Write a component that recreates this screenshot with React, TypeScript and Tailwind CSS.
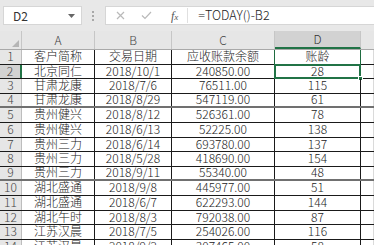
import React from 'react';

const rows: [string, string, string, string][] = [
  ['客户简称', '交易日期', '应收账款余额', '账龄'],
  ['北京同仁', '2018/10/1', '240850.00', '28'],
  ['甘肃龙康', '2018/7/6', '76511.00', '115'],
  ['甘肃龙康', '2018/8/29', '547119.00', '61'],
  ['贵州健兴', '2018/8/12', '526361.00', '78'],
  ['贵州健兴', '2018/6/13', '52225.00', '138'],
  ['贵州三力', '2018/6/14', '693780.00', '137'],
  ['贵州三力', '2018/5/28', '418690.00', '154'],
  ['贵州三力', '2018/9/11', '55340.00', '48'],
  ['湖北盛通', '2018/9/8', '445977.00', '51'],
  ['湖北盛通', '2018/6/7', '622293.00', '144'],
  ['湖北午时', '2018/8/3', '792038.00', '87'],
  ['江苏汉晨', '2018/7/5', '254026.00', '116'],
  ['江苏汉晨', '2018/9/2', '307465.00', '58'],
];

// alternating heights so 13 rows fill 50..240
const tall = [true, false, true, false, true, true, false, true, false, true, true, false, true, true];

export default function App() {
  return (
    <div className="w-[374px] h-[245px] overflow-hidden bg-white font-['Noto_Sans_CJK_SC','Liberation_Sans',sans-serif] text-[#222]">
      {/* formula bar */}
      <div className="h-[31px] bg-[#e8e8e8] flex items-center">
        <div className="ml-[3px] w-[79px] h-[19px] bg-white border border-[#d6d6d6] flex items-center justify-between pl-[9px] pr-[6px]">
          <span className="text-[12px] leading-none text-[#333]">D2</span>
          <svg width="7" height="4" viewBox="0 0 7 4">
            <path d="M0 0h7L3.5 4z" fill="#666" />
          </svg>
        </div>
        <div className="ml-[10px] flex flex-col gap-[2px]">
          <span className="w-[2px] h-[2px] bg-[#a8a8a8]" />
          <span className="w-[2px] h-[2px] bg-[#a8a8a8]" />
          <span className="w-[2px] h-[2px] bg-[#a8a8a8]" />
        </div>
        <div className="ml-[11px] flex-1 h-[19px] bg-white border-l border-y border-[#d6d6d6] flex items-center">
          <svg className="ml-[10px]" width="9" height="9" viewBox="0 0 9 9">
            <path d="M1 1l7 7M8 1L1 8" stroke="#b9b9b9" strokeWidth="1.2" />
          </svg>
          <svg className="ml-[16px]" width="11" height="9" viewBox="0 0 11 9">
            <path d="M1 4.5l3 3L10 1" stroke="#b9b9b9" strokeWidth="1.2" fill="none" />
          </svg>
          <span className="ml-[19px] font-['Liberation_Serif',serif] italic text-[12px] leading-none text-[#555]">
            f<span className="text-[9px]">x</span>
          </span>
          <span className="ml-[9px] w-px h-[15px] bg-[#e0e0e0]" />
          <span className="ml-[10px] text-[12.5px] font-light leading-none text-[#222]">=TODAY()-B2</span>
        </div>
      </div>

      {/* column headers */}
      <div className="h-[19px] flex bg-[#e6e6e6] border-b border-[#a9a9a9] text-[12px] font-light text-[#444]">
        <div className="w-[22px] border-r border-[#c6c6c6] flex items-end justify-end pr-[2px] pb-[2px]">
          <svg width="7" height="7" viewBox="0 0 7 7">
            <path d="M7 0v7H0z" fill="#b5b5b5" />
          </svg>
        </div>
        <div className="w-[73px] border-r border-[#c6c6c6] flex items-center justify-center leading-none">A</div>
        <div className="w-[77px] border-r border-[#c6c6c6] flex items-center justify-center leading-none">B</div>
        <div className="w-[103px] border-r border-[#c6c6c6] flex items-center justify-center leading-none">C</div>
        <div className="w-[86px] bg-[#d2d2d2] border-r border-[#c6c6c6] border-b-2 border-b-[#217346] flex items-center justify-center leading-none text-[#333]">D</div>
        <div className="flex-1" />
      </div>

      {/* rows */}
      {rows.map((r, i) => {
        const n = i + 1;
        const sel = n === 2;
        const heavy = n === 4 || n === 9;
        return (
          <div
            key={n}
            className={`${tall[i] ? 'h-[15px]' : 'h-[14px]'} flex text-[12px] font-light leading-none ${heavy ? 'border-b-2 border-[#707070]' : 'border-b border-[#1a1a1a]'}`}
          >
            <div
              className={`w-[22px] pb-[2px] flex items-center justify-center text-[12px] text-[#444] ${sel ? 'bg-[#d2d2d2] border-r-2 border-[#217346]' : 'bg-[#e6e6e6] border-r border-[#bdbdbd]'}`}
            >
              {n}
            </div>
            <div className="w-[73px] pb-[2px] border-r border-[#1a1a1a] flex items-center justify-center">{r[0]}</div>
            <div className="w-[77px] pb-[2px] border-r border-[#1a1a1a] flex items-center justify-center">{r[1]}</div>
            <div className={`w-[103px] pb-[2px] border-r flex items-center justify-center ${n === 1 ? 'border-[#1f6b40]' : 'border-[#1a1a1a]'}`}>{r[2]}</div>
            <div className={`relative w-[86px] pb-[2px] border-r flex items-center justify-center ${n === 1 ? 'border-[#1f6b40]' : 'border-[#1a1a1a]'}`}>
              {r[3]}
              {sel && (
                <>
                  <div className="absolute -left-[1px] -top-[1px] -right-[1px] -bottom-[1px] border-2 border-[#217346]" />
                  <div className="absolute -right-[3px] -bottom-[3px] w-[5px] h-[5px] bg-[#217346] border border-white" />
                </>
              )}
            </div>
            <div className="flex-1 border-r border-[#dadada]" />
          </div>
        );
      })}
    </div>
  );
}
